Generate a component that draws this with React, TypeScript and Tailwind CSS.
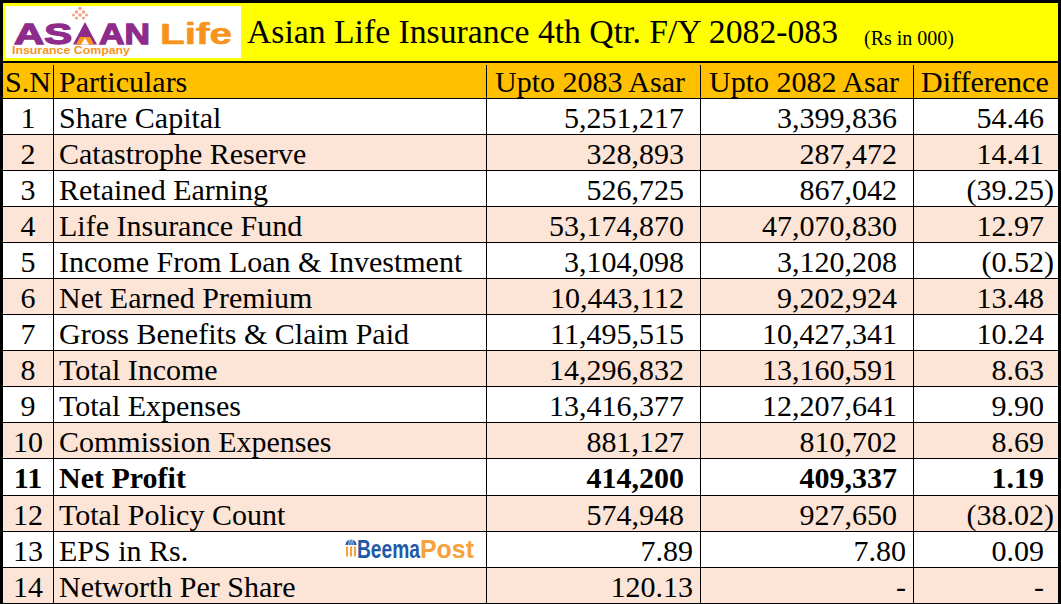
import React from 'react';

type Row = {
  sn: string;
  label: string;
  current: string;
  previous: string;
  diff: string;
  bold?: boolean;
};

const rows: Row[] = [
  { sn: '1', label: 'Share Capital', current: '5,251,217', previous: '3,399,836', diff: '54.46' },
  { sn: '2', label: 'Catastrophe Reserve', current: '328,893', previous: '287,472', diff: '14.41' },
  { sn: '3', label: 'Retained Earning', current: '526,725', previous: '867,042', diff: '(39.25)' },
  { sn: '4', label: 'Life Insurance Fund', current: '53,174,870', previous: '47,070,830', diff: '12.97' },
  { sn: '5', label: 'Income From Loan & Investment', current: '3,104,098', previous: '3,120,208', diff: '(0.52)' },
  { sn: '6', label: 'Net Earned Premium', current: '10,443,112', previous: '9,202,924', diff: '13.48' },
  { sn: '7', label: 'Gross Benefits & Claim Paid', current: '11,495,515', previous: '10,427,341', diff: '10.24' },
  { sn: '8', label: 'Total Income', current: '14,296,832', previous: '13,160,591', diff: '8.63' },
  { sn: '9', label: 'Total Expenses', current: '13,416,377', previous: '12,207,641', diff: '9.90' },
  { sn: '10', label: 'Commission Expenses', current: '881,127', previous: '810,702', diff: '8.69' },
  { sn: '11', label: 'Net Profit', current: '414,200', previous: '409,337', diff: '1.19', bold: true },
  { sn: '12', label: 'Total Policy Count', current: '574,948', previous: '927,650', diff: '(38.02)' },
  { sn: '13', label: 'EPS in Rs.', current: '7.89', previous: '7.80', diff: '0.09' },
  { sn: '14', label: 'Networth Per Share', current: '120.13', previous: '-', diff: '-' },
];

// excel style trailing space: grouped numbers sit further from the edge
const amountPad = (v: string) => {
  if (v === '-') return 'pr-[7px]';
  if (v.includes(',')) return 'pr-[16px]';
  return 'pr-[7px]';
};

const diffPad = (v: string) => (v.startsWith('(') ? 'pr-[4px]' : 'pr-[14px]');

const logoFont = "'Liberation Sans', Arial, sans-serif";

const AsianLifeLogo: React.FC = () => (
  <svg width="236" height="52" viewBox="0 0 236 52">
    <g fill="#f3a088">
      <circle cx="75" cy="2.5" r="1.8" />
      <circle cx="71.5" cy="6" r="1.8" />
      <circle cx="78.5" cy="6" r="1.8" />
      <circle cx="68.5" cy="9" r="1.5" />
      <circle cx="75" cy="9" r="1.8" />
      <circle cx="81.5" cy="9" r="1.5" />
      <circle cx="71.5" cy="12" r="1.6" />
      <circle cx="78.5" cy="12" r="1.6" />
    </g>
    <text
      x="9"
      y="38"
      textLength="58"
      lengthAdjust="spacingAndGlyphs"
      fill="#8e2b8b"
      stroke="#8e2b8b"
      strokeWidth="1.3"
      fontFamily={logoFont}
      fontWeight="700"
      fontSize="30"
    >
      AS
    </text>
    <polygon points="68,38.6 80,16 92,38.6" fill="#8e2b8b" />
    <polygon points="71,38.6 75,31 85,31 89,38.6" fill="#f7941d" />
    <polygon points="76,38.6 80,32 84,38.6" fill="#ffffff" />
    <text
      x="94"
      y="38"
      textLength="51"
      lengthAdjust="spacingAndGlyphs"
      fill="#8e2b8b"
      stroke="#8e2b8b"
      strokeWidth="1.3"
      fontFamily={logoFont}
      fontWeight="700"
      fontSize="30"
    >
      AN
    </text>
    <text
      x="155"
      y="38"
      textLength="72"
      lengthAdjust="spacingAndGlyphs"
      fill="#f7941d"
      stroke="#f7941d"
      strokeWidth="0.6"
      fontFamily={logoFont}
      fontWeight="700"
      fontSize="30"
    >
      Life
    </text>
    <text x="7" y="48" textLength="118" lengthAdjust="spacingAndGlyphs" fill="#f7941d" fontFamily={logoFont} fontWeight="700" fontSize="10">
      Insurance Company
    </text>
  </svg>
);

const BeemaPostLogo: React.FC = () => (
  <svg width="130" height="28" viewBox="0 0 130 28">
    <path d="M0.5 10 A5.5 5.5 0 0 1 11.5 10 Z" fill="#1e5aa8" />
    <path d="M3.5 10 L4.5 5 M8.5 10 L7.5 5 M6 10 L6 4.8" stroke="#ffffff" strokeWidth="0.7" />
    <rect x="1" y="11.5" width="2" height="10" fill="#f7a13b" />
    <rect x="5" y="11.5" width="2" height="10" fill="#f7a13b" />
    <rect x="9" y="11.5" width="2" height="10" fill="#f7a13b" />
    <text x="12" y="23" textLength="63" lengthAdjust="spacingAndGlyphs" fill="#1e5aa8" fontFamily={logoFont} fontWeight="700" fontSize="25">
      Beema
    </text>
    <text x="75" y="23" textLength="54" lengthAdjust="spacingAndGlyphs" fill="#f7a13b" fontFamily={logoFont} fontWeight="700" fontSize="25">
      Post
    </text>
  </svg>
);

const cols = 'grid grid-cols-[51px_433px_214px_213px_1fr]';

const App: React.FC = () => {
  return (
    <div
      className="w-[1061px] h-[604px] overflow-hidden bg-white text-black"
      style={{ fontFamily: "'Liberation Serif', 'Times New Roman', serif" }}
    >
      <div className="border-x-[3px] border-t-[3px] border-black">
        {/* title band */}
        <div className="flex items-center h-[60px] bg-[#ffff00] border-b-2 border-black pl-[2px]">
          <div className="bg-white w-[236px] h-[52px]">
            <AsianLifeLogo />
          </div>
          <span className="ml-[6px] text-[33.7px] leading-none">
            Asian Life Insurance 4th Qtr. F/Y 2082-083
          </span>
          <span className="ml-[26px] text-[20px] leading-none mt-[12px]">(Rs in 000)</span>
        </div>

        {/* column headings */}
        <div className={`${cols} h-[36px] bg-[#ffc000] border-b border-black text-[30px] leading-[33px] pt-[2px]`}>
          <div className="border-r border-black text-center">S.N</div>
          <div className="border-r border-black pl-[5px]">Particulars</div>
          <div className="border-r border-black pl-[8px]">Upto 2083 Asar</div>
          <div className="border-r border-black pl-[8px]">Upto 2082 Asar</div>
          <div className="pl-[7px]">Difference</div>
        </div>

        {rows.map((row, i) => (
          <div
            key={row.sn}
            className={`${cols} ${row.bold ? 'h-[37px] font-bold leading-[34px]' : 'h-[36px] leading-[33px]'} ${
              i % 2 === 1 ? 'bg-[#fce4d6]' : 'bg-white'
            } border-b border-black text-[30px]`}
          >
            <div className="border-r border-black text-center pt-[2px]">{row.sn}</div>
            <div className="border-r border-black pl-[5px] pt-[2px] flex items-center justify-between">
              <span>{row.label}</span>
              {row.sn === '13' && (
                <span className="mr-[11px] -mt-[4px] flex items-center">
                  <BeemaPostLogo />
                </span>
              )}
            </div>
            <div className={`border-r border-black text-right pt-[2px] ${amountPad(row.current)}`}>{row.current}</div>
            <div className={`border-r border-black text-right pt-[2px] ${amountPad(row.previous)}`}>{row.previous}</div>
            <div className={`text-right pt-[2px] ${diffPad(row.diff)}`}>{row.diff}</div>
          </div>
        ))}
      </div>
    </div>
  );
};

export default App;
